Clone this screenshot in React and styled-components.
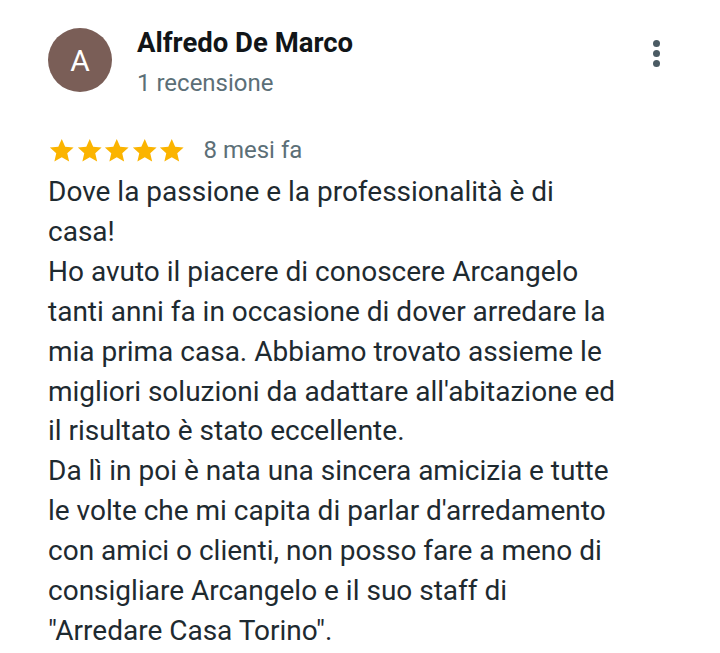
import styled, { createGlobalStyle } from 'styled-components';

const GlobalStyle = createGlobalStyle`
  html, body {
    margin: 0;
    background: #ffffff;
  }
  body {
    font-family: Roboto, "Noto Sans", Arial, sans-serif;
  }
`;

const lines = [
  'Dove la passione e la professionalità è di',
  'casa!',
  'Ho avuto il piacere di conoscere Arcangelo',
  'tanti anni fa in occasione di dover arredare la',
  'mia prima casa. Abbiamo trovato assieme le',
  "migliori soluzioni da adattare all'abitazione ed",
  'il risultato è stato eccellente.',
  'Da lì in poi è nata una sincera amicizia e tutte',
  "le volte che mi capita di parlar d'arredamento",
  'con amici o clienti, non posso fare a meno di',
  'consigliare Arcangelo e il suo staff di',
  '"Arredare Casa Torino".',
];

const Card = styled.div`
  width: 720px;
  height: 653px;
  box-sizing: border-box;
  padding: 28px 0 0 48px;
  overflow: hidden;
`;

const Header = styled.div`
  display: flex;
  align-items: flex-start;
  gap: 25px;
  padding-right: 56px;
`;

const Avatar = styled.div`
  width: 64px;
  height: 64px;
  border-radius: 50%;
  background: #7a5e57;
  color: #ffffff;
  display: flex;
  align-items: center;
  justify-content: center;
  font-size: 30px;
  font-weight: 400;
  flex-shrink: 0;
`;

const Who = styled.div`
  flex: 1;
  display: flex;
  flex-direction: column;
  gap: 11px;
`;

const Name = styled.div`
  font-size: 27.5px;
  font-weight: 700;
  color: #111518;
  line-height: 30px;
`;

const Count = styled.div`
  font-size: 24px;
  color: #5c6f77;
  line-height: 28px;
`;

const MenuButton = styled.div`
  width: 16px;
  display: flex;
  flex-direction: column;
  align-items: center;
  gap: 3px;
  padding-top: 12px;
`;

const Dot = styled.span`
  width: 7px;
  height: 7px;
  border-radius: 50%;
  background: #4b5b63;
`;

const RatingRow = styled.div`
  display: flex;
  align-items: center;
  gap: 18px;
  margin-top: 38px;
  height: 30px;
`;

const Stars = styled.div`
  display: flex;
`;

const When = styled.span`
  font-size: 24px;
  color: #5c6f77;
`;

const Body = styled.div`
  margin-top: 7px;
  font-size: 28px;
  line-height: 39.9px;
  color: #1e2a30;
`;

const Line = styled.div`
  white-space: nowrap;
`;

const Star = () => (
  <svg width="27.5" height="27" viewBox="0 0 24 24">
    <path
      fill="#fbb400"
      d="M12 1.8l3.05 6.9 7.5.7-5.67 4.98 1.68 7.37L12 17.9l-6.56 3.85 1.68-7.37L1.45 9.4l7.5-.7z"
    />
  </svg>
);

export default function App() {
  return (
    <>
      <GlobalStyle />
      <Card>
        <Header>
          <Avatar>A</Avatar>
          <Who>
            <Name>Alfredo De Marco</Name>
            <Count>1 recensione</Count>
          </Who>
          <MenuButton>
            <Dot />
            <Dot />
            <Dot />
          </MenuButton>
        </Header>
        <RatingRow>
          <Stars>
            {[0, 1, 2, 3, 4].map((i) => (
              <Star key={i} />
            ))}
          </Stars>
          <When>8 mesi fa</When>
        </RatingRow>
        <Body>
          {lines.map((l, i) => (
            <Line key={i}>{l}</Line>
          ))}
        </Body>
      </Card>
    </>
  );
}
